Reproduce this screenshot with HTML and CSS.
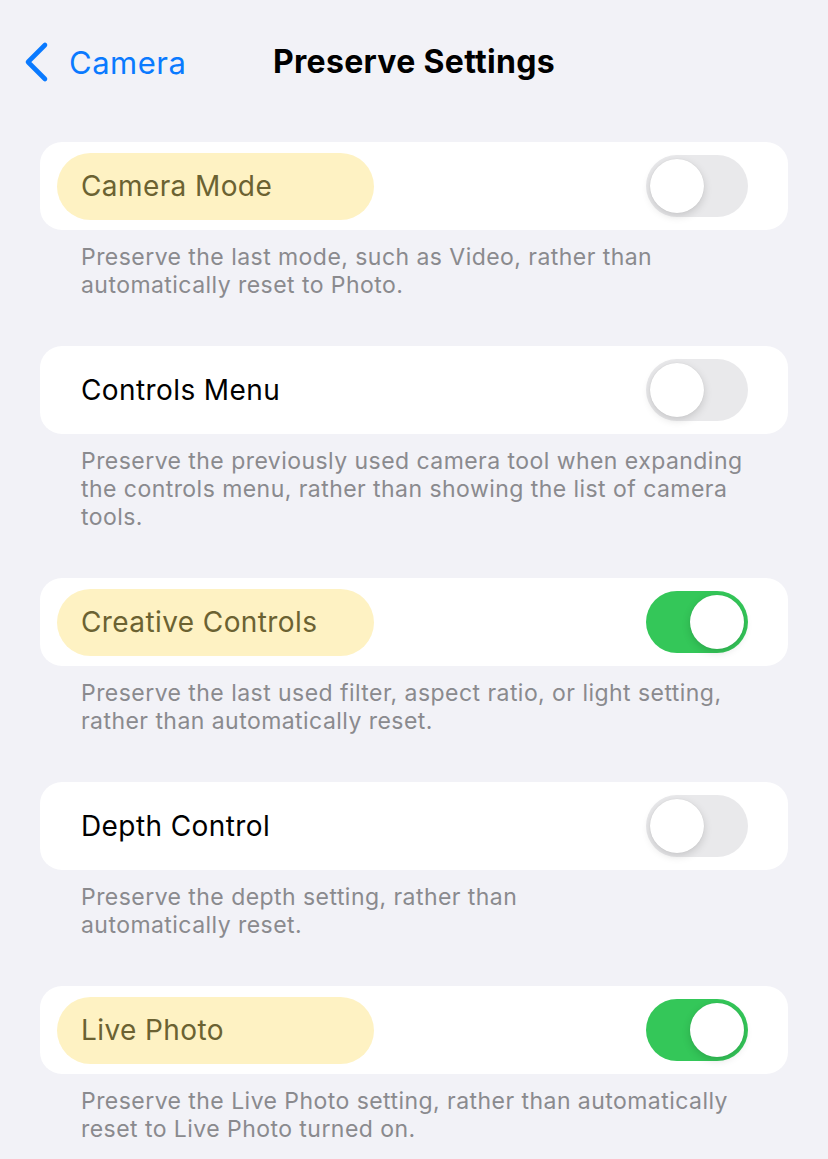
FILE: index.html
```html
<!DOCTYPE html>
<html>
<head>
<meta charset="utf-8">
<link rel="stylesheet" href="styles.css">
</head>
<body>
<header class="nav">
  <div class="back">
    <svg class="chev" width="26" height="42" viewBox="0 0 26 42"><path d="M21 4 L4 21 L21 38" fill="none" stroke="#0a7aff" stroke-width="4.6" stroke-linecap="round" stroke-linejoin="round"/></svg>
    <span class="back-label">Camera</span>
  </div>
  <h1 class="title">Preserve Settings</h1>
</header>
<main class="list">
  <section class="group">
    <div class="card">
      <span class="label hl">Camera Mode</span>
      <span class="toggle"><span class="knob"></span></span>
    </div>
    <p class="foot">Preserve the last mode, such as Video, rather than<br>automatically reset to Photo.</p>
  </section>
  <section class="group">
    <div class="card">
      <span class="label">Controls Menu</span>
      <span class="toggle"><span class="knob"></span></span>
    </div>
    <p class="foot">Preserve the previously used camera tool when expanding<br>the controls menu, rather than showing the list of camera<br>tools.</p>
  </section>
  <section class="group">
    <div class="card">
      <span class="label hl">Creative Controls</span>
      <span class="toggle on"><span class="knob"></span></span>
    </div>
    <p class="foot">Preserve the last used filter, aspect ratio, or light setting,<br>rather than automatically reset.</p>
  </section>
  <section class="group">
    <div class="card">
      <span class="label">Depth Control</span>
      <span class="toggle"><span class="knob"></span></span>
    </div>
    <p class="foot">Preserve the depth setting, rather than<br>automatically reset.</p>
  </section>
  <section class="group">
    <div class="card">
      <span class="label hl">Live Photo</span>
      <span class="toggle on"><span class="knob"></span></span>
    </div>
    <p class="foot">Preserve the Live Photo setting, rather than automatically<br>reset to Live Photo turned on.</p>
  </section>
</main>
</body>
</html>
```
FILE: styles.css
```css
* { box-sizing: border-box; }
html, body { margin: 0; padding: 0; }
body {
  background: #f2f2f7;
  font-family: Inter, "Noto Sans", "Liberation Sans", sans-serif;
  color: #000;
  width: 828px;
  height: 1159px;
  overflow: hidden;
}
.nav {
  position: relative;
  height: 142px;
  display: flex;
  align-items: flex-start;
  justify-content: center;
  padding-top: 41px;
}
.back {
  position: absolute;
  left: 24px;
  top: 41px;
  display: flex;
  align-items: center;
  gap: 19px;
  height: 42px;
}
.chev { display: block; }
.back-label {
  color: #0a7aff;
  font-size: 31px;
  letter-spacing: 0.5px;
}
.title {
  margin: 0;
  height: 42px;
  line-height: 42px;
  font-size: 32px;
  font-weight: 700;
  letter-spacing: 0.3px;
}
.list {
  padding: 0 40px;
}
.group { margin-bottom: 47px; }
.card {
  height: 88px;
  background: #fff;
  border-radius: 22px;
  display: flex;
  align-items: center;
  justify-content: space-between;
  padding: 0 40px 0 41px;
}
.label {
  font-size: 28px;
  letter-spacing: 0.4px;
  line-height: 67px;
}
.label.hl {
  display: inline-block;
  width: 317px;
  height: 67px;
  margin-left: -24px;
  padding-left: 24px;
  border-radius: 34px;
  background: #fef2c3;
  color: #6b6232;
}
.toggle {
  width: 102px;
  height: 62px;
  border-radius: 31px;
  background: #e9e9eb;
  padding: 4px;
  display: flex;
  justify-content: flex-start;
}
.toggle.on {
  background: #34c759;
  justify-content: flex-end;
}
.knob {
  width: 54px;
  height: 54px;
  border-radius: 50%;
  background: #fff;
  box-shadow: 0 3px 8px rgba(0,0,0,0.15), 0 0 1px rgba(0,0,0,0.12);
}
.foot {
  margin: 0;
  padding: 13px 41px 0;
  font-size: 23px;
  line-height: 28px;
  color: #8a8a8e;
  letter-spacing: 0.45px;
}
```
